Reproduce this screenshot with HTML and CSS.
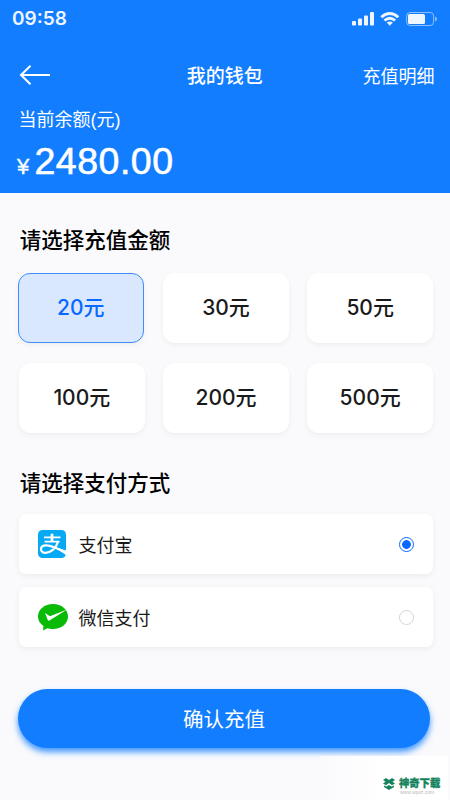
FILE: index.html
```html
<!DOCTYPE html>
<html lang="zh-CN">
<head>
<meta charset="utf-8">
<title>我的钱包</title>
<link rel="stylesheet" href="styles.css">
</head>
<body>
<header class="header">
  <div class="status">
    <span class="time">09:58</span>
    <svg class="status-icons" width="85" height="16" viewBox="0 0 85 16" fill="#fff">
      <g opacity=".93">
        <rect x="0" y="10" width="4" height="4.500" rx="1"/><rect x="6" y="7.500" width="4" height="7" rx="1"/><rect x="12" y="4.500" width="4" height="10" rx="1"/><rect x="18" y="1" width="4" height="13.500" rx="1"/>
        <path d="M28.300 5.200Q37.800-3.200 47.300 5.200L45.300 7.300Q37.800 .7 30.300 7.300Z"/>
        <path d="M31.500 8.500Q37.800 3.200 44.100 8.500L42.200 10.500Q37.800 7 33.400 10.500Z"/>
        <path d="M34.700 11.600Q37.800 9.400 40.900 11.600L37.800 14.700Z"/>
      </g>
      <rect x="54.600" y="1.500" width="27" height="13" rx="3.500" fill="none" stroke="#fff" opacity=".5"/>
      <rect x="56" y="3" width="17" height="10" rx="1.500" opacity=".93"/>
      <path d="M83 5.500Q85 6.200 85 8T83 10.500Z" opacity=".5"/>
    </svg>
  </div>
  <nav class="nav">
    <svg class="back" width="32" height="22" viewBox="0 0 32 22" fill="none" stroke="#fff" stroke-width="2"><path d="M31 11H2M11.500 1.800L2 11l9.500 9.200"/></svg>
    <h1 class="title">我的钱包</h1>
    <a class="detail">充值明细</a>
  </nav>
  <div class="label">当前余额<span class="paren">(</span>元<span class="paren">)</span></div>
  <div class="balance"><span class="yen">¥</span><span class="num">2480.00</span></div>
</header>
<main class="main">
  <h2 class="heading">请选择充值金额</h2>
  <div class="amounts">
    <div class="amount active">20元</div><div class="amount">30元</div><div class="amount">50元</div>
    <div class="amount">100元</div><div class="amount">200元</div><div class="amount">500元</div>
  </div>
  <h2 class="heading second">请选择支付方式</h2>
  <div class="methods">
    <div class="method">
      <svg class="pay-icon" width="32" height="30" viewBox="0 0 32 30">
        <rect x="0" y="1" width="28" height="28" rx="4.500" fill="#06a9f4"/>
        <g fill="none" stroke="#fff">
          <path d="M6 8.300H22.500M6.500 12.700H21.500" stroke-width="1.700"/>
          <path d="M14 4.700V12.500" stroke-width="2.700"/>
          <path d="M20 12.700C18 19.500 12.500 24 7 23.800C1.500 23.500 1.300 16.500 8 16.300C14 16.200 20 20.200 28 23.500" stroke-width="2.200"/>
        </g>
        <path d="M16 18L28 21.500V26Z" fill="#fff"/>
      </svg>
      <span class="name">支付宝</span><span class="radio on"></span>
    </div>
    <div class="method">
      <svg class="pay-icon" width="32" height="30" viewBox="0 0 32 30">
        <path d="M15 2C23.500 2 30 7.500 30 14.500S23.500 27 15 27C12.500 27 10.500 26.600 9.300 26.200L5 28.500L5.500 24C2 21.700 0 18.500 0 14.500C0 7.500 6.500 2 15 2Z" fill="#09bb07"/>
        <path d="M7 11L12 14.200L29 7.500L11.500 18.500Q10.500 19 9.800 18Z" fill="#fff"/>
      </svg>
      <span class="name">微信支付</span><span class="radio"></span>
    </div>
  </div>
  <button class="submit">确认充值</button>
</main>
<div class="watermark">
  <svg width="14" height="14" viewBox="0 0 14 14" fill="#16835d"><path d="M1 3L4 1L7 3L10 1L13 3L10.500 4.700L13 6.400L10 8.200L7 6L4 8.200L1 6.400L3.500 4.700ZM2 8.500L4.500 9.600L7 8L9.500 9.600L12 8.500V10L7 13L2 10Z"/></svg>
  <div class="mark-text"><b>神奇下载</b><small>www.sqxiz.com</small></div>
</div>
</body>
</html>
```
FILE: styles.css
```css
* { box-sizing: border-box; }
body { margin: 0; width: 450px; height: 800px; overflow: hidden; position: relative; background: #fafafd; color: #1a1a1a; font-family: "Noto Sans CJK SC", sans-serif; }
.header { height: 193px; background: #127eff; color: #fff; }
.status { height: 38px; padding: 0 13px 0 12px; display: flex; align-items: center; justify-content: space-between; }
.time { font: 600 19px/38px Inter, sans-serif; opacity: .93; }
.nav { height: 74px; padding: 0 15.5px 0 19px; display: grid; grid-template-columns: 1fr auto 1fr; align-items: center; }
.title { margin: 0 2px 0 -2px; font-size: 19px; line-height: 28px; font-weight: 500; }
.detail { justify-self: end; font-size: 18px; line-height: 28px; }
.label { padding-left: 18.5px; font-size: 18px; line-height: 26px; margin-top: -7px; }
.paren { font-family: "Liberation Sans", sans-serif; }
.balance { padding-left: 17px; display: flex; align-items: baseline; line-height: 48px; margin-top: 4px; font-family: "Liberation Sans", sans-serif; }
.yen { font-size: 22px; width: 17.5px; -webkit-text-stroke: .4px #fff; }
.num { font-size: 37.5px; letter-spacing: .5px; -webkit-text-stroke: .6px #fff; }
.main { padding: 31px 17px 0 19px; }
.heading { margin: 0; padding-left: .7px; font-size: 21.5px; line-height: 30px; font-weight: 500; color: #000; }
.amounts { display: grid; grid-template-columns: repeat(3, 1fr); gap: 20px 18.5px; margin-top: 19px; }
.amount { height: 70px; border-radius: 12px; background: #fff; box-shadow: 0 2px 5px rgba(0,0,0,.05); display: flex; align-items: center; justify-content: center; font: 500 21px/30px Inter, "Noto Sans CJK SC", sans-serif; }
.active { margin: 0 1px 0 -1px; border: 1px solid #3e8cff; background: #dae8ff; color: #0868ff; }
.second { margin-top: 34px; }
.methods { margin-top: 17px; display: grid; gap: 13px; }
.method { height: 60px; padding: 0 19px; border-radius: 7px; background: #fff; box-shadow: 0 2px 6px rgba(0,0,0,.06); display: flex; align-items: center; }
.name { margin-left: 8.5px; padding-bottom: 1px; flex: 1; font-size: 18px; line-height: 26px; }
.radio { width: 15px; height: 15px; border: 1px solid #d4d4d4; border-radius: 50%; }
.on { border-color: #0868ff; background: radial-gradient(circle, #0868ff 0 4px, #fff 4.700px); }
.submit { display: block; width: 412px; height: 59px; margin: 42px 0 0 -1px; padding: 0 0 2px; border: 0; border-radius: 30px; background: #127eff; box-shadow: 0 4px 6px rgba(18,126,255,.8); color: #fff; font: 400 20.5px/30px "Noto Sans CJK SC", sans-serif; }
.watermark { position: absolute; left: 320px; top: 756px; width: 128px; height: 44px; background: linear-gradient(90deg, #fafafd, #fff 50%); padding: 21px 0 0 62px; display: flex; gap: 3px; color: #16835d; }
.mark-text { display: flex; flex-direction: column; }
.mark-text b { font-size: 10.300px; line-height: 11px; font-weight: 900; -webkit-text-stroke: .3px #16835d; }
.mark-text small { margin-top: 2px; padding-left: 1px; font: 5px/5px "Liberation Sans", sans-serif; color: #bbb; }
```
